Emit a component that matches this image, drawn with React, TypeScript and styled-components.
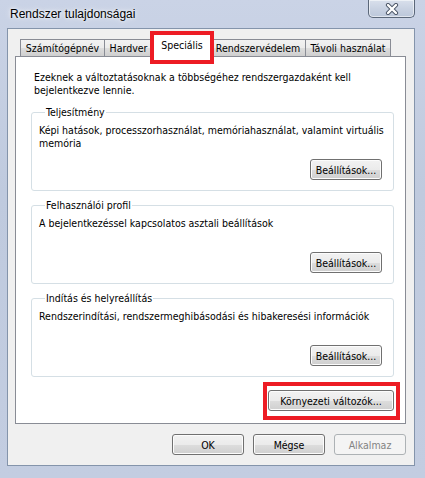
import styled, { createGlobalStyle } from "styled-components";

const GlobalStyle = createGlobalStyle`
  html, body {
    margin: 0;
    padding: 0;
  }
  body {
    font-family: "DejaVu Sans Condensed", "DejaVu Sans", sans-serif;
    font-stretch: condensed;
    font-size: 10.5px;
    color: #000;
  }
`;

const Window = styled.div`
  width: 425px;
  height: 478px;
  box-sizing: border-box;
  display: flex;
  flex-direction: column;
  background: linear-gradient(180deg, #cad3e6 0%, #bfcade 40%, #c3cde1 100%);
  overflow: hidden;
`;

const TitleBar = styled.div`
  height: 28px;
  display: flex;
  align-items: flex-start;
  justify-content: space-between;
  flex-shrink: 0;
`;

const Title = styled.span`
  margin: 7px 0 0 10px;
  font-family: "Liberation Sans", Arial, sans-serif;
  font-stretch: normal;
  font-size: 12px;
  color: #000;
  text-shadow: 0 0 6px rgba(255, 255, 255, 0.9), 0 0 3px rgba(255, 255, 255, 0.9);
`;

const CloseButton = styled.div`
  width: 47px;
  height: 18px;
  margin-right: 10px;
  box-sizing: border-box;
  border: 1px solid #5b6779;
  border-top: none;
  border-radius: 0 0 5px 5px;
  background: linear-gradient(180deg, #d9e0ec 0%, #c9d2e2 50%, #bcc7da 100%);
  box-shadow: inset 0 0 0 1px rgba(255, 255, 255, 0.55);
  display: flex;
  align-items: center;
  justify-content: center;
`;

const Client = styled.div`
  flex: 1;
  margin: 0 10px 12px 7px;
  background: #f0f0f0;
  border: 1px solid #8494ab;
  display: flex;
  flex-direction: column;
  padding: 4px 8px 0 7px;
`;

const TabStrip = styled.div`
  display: flex;
  align-items: flex-end;
  height: 24px;
  padding-left: 5px;
  margin-bottom: -1px;
  position: relative;
  z-index: 1;
`;

const Tab = styled.div<{ $w: number; $active?: boolean }>`
  box-sizing: border-box;
  width: ${(p) => p.$w}px;
  height: ${(p) => (p.$active ? 23 : 18)}px;
  border: 1px solid #898c95;
  border-bottom: ${(p) => (p.$active ? "none" : "1px solid #898c95")};
  margin: 0 ${(p) => (p.$active ? "-2px" : "0")} 0 ${(p) => (p.$active ? "-2px" : "-1px")};
  background: ${(p) =>
    p.$active ? "#ffffff" : "linear-gradient(180deg, #f2f2f2 0%, #ebebeb 50%, #dddddd 51%, #cfcfcf 100%)"};
  display: flex;
  align-items: center;
  justify-content: center;
  padding-bottom: ${(p) => (p.$active ? 3 : 0)}px;
  position: relative;
  z-index: ${(p) => (p.$active ? 2 : 0)};
  white-space: nowrap;

  &:first-child {
    margin-left: 0;
  }
`;

const Highlight = styled.span`
  position: absolute;
  left: -2px;
  right: -2px;
  top: -4px;
  bottom: -7px;
  border: 4px solid #ed1c24;
  pointer-events: none;
`;

const Panel = styled.div`
  background: #fff;
  border: 1px solid #898c95;
  height: 368px;
  box-sizing: border-box;
  padding: 14px 11px 0 15px;
  display: flex;
  flex-direction: column;
`;

const Intro = styled.p`
  margin: 0 0 9px 3px;
  line-height: 13px;
  width: 330px;
`;

const Groups = styled.div`
  display: flex;
  flex-direction: column;
  gap: 8px;
`;

const Group = styled.fieldset`
  margin: 0;
  padding: 0 11px 10px 7px;
  border: 1px solid #d5dfe5;
  border-radius: 3px;
  min-width: 0;
`;

const Legend = styled.legend`
  padding: 0 1px;
  margin-left: 6px;
  line-height: 13px;
`;

const GroupBody = styled.div`
  height: 61px;
  box-sizing: border-box;
  padding-top: 5px;
  display: flex;
  flex-direction: column;
`;

const Desc = styled.div`
  line-height: 13px;
  margin-right: -8px;
`;

const Button = styled.button<{ $w?: number }>`
  box-sizing: border-box;
  width: ${(p) => p.$w ?? 72}px;
  height: 21px;
  padding: 0;
  font-family: inherit;
  font-stretch: inherit;
  font-size: 10.5px;
  color: #000;
  border: 1px solid #707070;
  border-radius: 3px;
  background: linear-gradient(180deg, #f2f2f2 0%, #ebebeb 50%, #dddddd 51%, #cfcfcf 100%);
  box-shadow: inset 0 0 0 1px #fcfcfc;

  &:disabled {
    color: #838383;
    border-color: #adb2b5;
    background: #f4f4f4;
    box-shadow: none;
  }
`;

const GroupButton = styled(Button)`
  margin-top: auto;
  align-self: flex-end;
`;

const EnvRow = styled.div`
  display: flex;
  justify-content: flex-end;
  margin-top: 5px;
  margin-right: -6px;
`;

const EnvFrame = styled.div`
  display: flex;
  border: 4px solid #ed1c24;
  padding: 4px 2px 5px 1px;
`;

const Footer = styled.div`
  display: flex;
  justify-content: flex-end;
  gap: 9px;
  margin-top: 10px;
`;

const groups = [
  {
    title: "Teljesítmény",
    text: "Képi hatások, processzorhasználat, memóriahasználat, valamint virtuális memória",
  },
  {
    title: "Felhasználói profil",
    text: "A bejelentkezéssel kapcsolatos asztali beállítások",
  },
  {
    title: "Indítás és helyreállítás",
    text: "Rendszerindítási, rendszermeghibásodási és hibakeresési információk",
  },
];

const tabs = [
  { label: "Számítógépnév", w: 85 },
  { label: "Hardver", w: 49 },
  { label: "Speciális", w: 62, active: true },
  { label: "Rendszervédelem", w: 96 },
  { label: "Távoli használat", w: 86 },
];

export default function App() {
  return (
    <>
      <GlobalStyle />
      <Window>
        <TitleBar>
          <Title>Rendszer tulajdonságai</Title>
          <CloseButton>
            <svg width="14" height="12" viewBox="0 0 14 12">
              <path d="M3 2 L11 10 M11 2 L3 10" stroke="#4b5566" strokeWidth="4.2" strokeLinecap="round" />
              <path d="M3 2 L11 10 M11 2 L3 10" stroke="#ffffff" strokeWidth="2.4" strokeLinecap="round" />
            </svg>
          </CloseButton>
        </TitleBar>
        <Client>
          <TabStrip>
            {tabs.map((t) => (
              <Tab key={t.label} $w={t.w} $active={t.active}>
                {t.label}
                {t.active && <Highlight />}
              </Tab>
            ))}
          </TabStrip>
          <Panel>
            <Intro>Ezeknek a változtatásoknak a többségéhez rendszergazdaként kell bejelentkezve lennie.</Intro>
            <Groups>
              {groups.map((g) => (
                <Group key={g.title}>
                  <Legend>{g.title}</Legend>
                  <GroupBody>
                    <Desc>{g.text}</Desc>
                    <GroupButton>Beállítások...</GroupButton>
                  </GroupBody>
                </Group>
              ))}
            </Groups>
            <EnvRow>
              <EnvFrame>
                <Button $w={126}>Környezeti változók...</Button>
              </EnvFrame>
            </EnvRow>
          </Panel>
          <Footer>
            <Button>OK</Button>
            <Button>Mégse</Button>
            <Button disabled>Alkalmaz</Button>
          </Footer>
        </Client>
      </Window>
    </>
  );
}
